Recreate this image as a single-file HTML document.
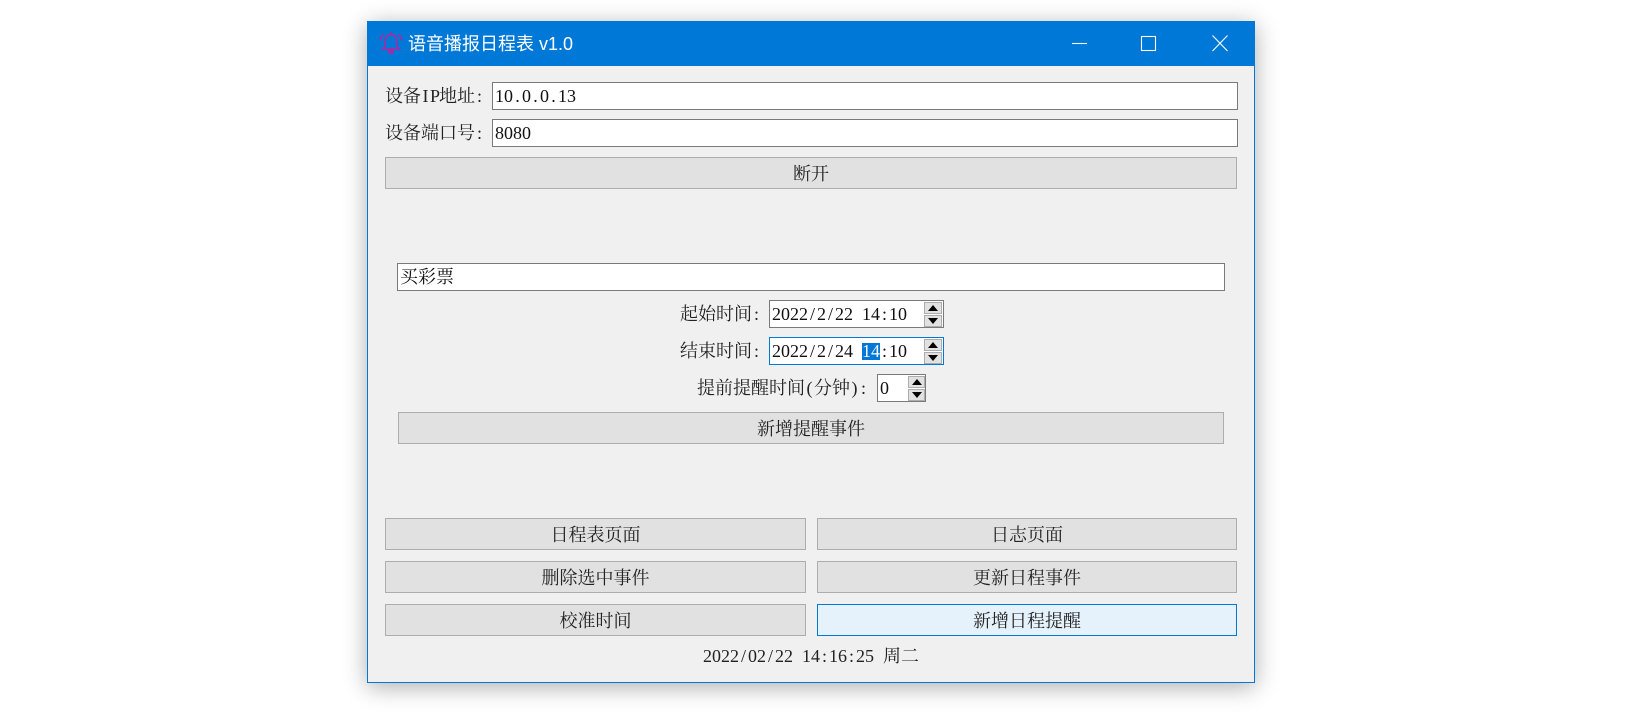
<!DOCTYPE html>
<html lang="zh">
<head>
<meta charset="utf-8">
<title>语音播报日程表 v1.0</title>
<style>
html,body{margin:0;padding:0;width:1649px;height:712px;overflow:hidden;background:#fff}
*{box-sizing:border-box}
body{position:relative;font-family:"Liberation Serif","Noto Serif CJK SC",serif;font-size:18px;color:#222}
.a{position:absolute}
.m{display:inline-block;width:9px;text-align:center;white-space:pre}
.win{position:absolute;left:367px;top:21px;width:888px;height:662px;background:#f0f0f0;border:1px solid #0078d7;box-shadow:0 4px 22px rgba(0,0,0,.32)}
.bar{position:absolute;left:367px;top:21px;width:888px;height:45px;background:#0078d7}
.title{position:absolute;left:408px;top:31px;height:26px;line-height:26px;color:#fff;font-family:"Liberation Sans","Noto Sans CJK SC",sans-serif;font-size:18px;white-space:nowrap}
.btn{position:absolute;background:#e1e1e1;border:1px solid #adadad;display:flex;align-items:center;justify-content:center;color:#222}
.btn.on{background:#e5f1fb;border-color:#0078d7}
.inp{position:absolute;background:#fff;border:1px solid #7a7a7a;line-height:26px;padding-left:2px;white-space:pre;color:#111}
.lab{position:absolute;height:26px;line-height:26px;white-space:nowrap;color:#222}
.sel{background:#0078d7;color:#fff;display:inline-block;height:17px;line-height:17px}
.sp{position:absolute;width:18px;height:12px;background:#e1e1e1;border:1px solid #adadad}
.sp svg{position:absolute;left:3px;top:2px}
</style>
</head>
<body>
<div class="win"></div>
<div class="bar"></div>

<svg class="a" style="left:379px;top:31px" width="24" height="25" viewBox="0 0 24 25" fill="none" stroke="#9a30a8" stroke-width="1.8">
<path d="M12 3.500c-3.600 0-5.600 2.700-5.600 6v4.200c0 1.800-1 2.900-2.400 4.300h16c-1.400-1.400-2.400-2.500-2.400-4.300V9.500c0-3.300-2-6-5.600-6z"/>
<path d="M9.500 19.500c.4 2 1.300 3 2.500 3s2.100-1 2.500-3z" fill="#9a30a8"/>
<path d="M12 1v2.500M4.500 3.500C2.500 5 1.500 7 1.200 9.500M19.500 3.500c2 1.500 3 3.500 3.300 6"/>
</svg>
<div class="title">语音播报日程表 v1.0</div>

<svg class="a" style="left:1065px;top:30px" width="175" height="28" viewBox="0 0 175 28" fill="none" stroke="#fff" stroke-width="1.100">
<path d="M7 13.500h15"/>
<rect x="76.500" y="6.500" width="14" height="14"/>
<path d="M147.500 5.500l15 15.500M162.500 5.500l-15 15.500"/>
</svg>

<div class="lab" style="left:385px;top:83px">设备<span class="m">I</span><span class="m">P</span>地址<span class="m">:</span></div>
<div class="inp" style="left:492px;top:82px;width:746px;height:28px">10<span class="m">.</span>0<span class="m">.</span>0<span class="m">.</span>13</div>
<div class="lab" style="left:385px;top:120px">设备端口号<span class="m">:</span></div>
<div class="inp" style="left:492px;top:119px;width:746px;height:28px">8080</div>
<div class="btn" style="left:385px;top:157px;width:852px;height:32px">断开</div>

<div class="inp" style="left:397px;top:263px;width:828px;height:28px">买彩票</div>

<div class="lab" style="left:680px;top:301px">起始时间<span class="m">:</span></div>
<div class="inp" style="left:769px;top:300px;width:175px;height:28px">2022<span class="m">/</span>2<span class="m">/</span>22<span class="m"> </span>14<span class="m">:</span>10</div>
<div class="sp" style="left:924px;top:302px"><svg width="10" height="7"><path d="M5 0L10 6H0z" fill="#000"/></svg></div>
<div class="sp" style="left:924px;top:315px"><svg width="10" height="7"><path d="M5 6L10 0H0z" fill="#000"/></svg></div>

<div class="lab" style="left:680px;top:338px">结束时间<span class="m">:</span></div>
<div class="inp" style="left:769px;top:337px;width:175px;height:28px;border-color:#0078d7">2022<span class="m">/</span>2<span class="m">/</span>24<span class="m"> </span><span class="sel">14</span><span class="m">:</span>10</div>
<div class="sp" style="left:924px;top:339px"><svg width="10" height="7"><path d="M5 0L10 6H0z" fill="#000"/></svg></div>
<div class="sp" style="left:924px;top:352px"><svg width="10" height="7"><path d="M5 6L10 0H0z" fill="#000"/></svg></div>

<div class="lab" style="left:697px;top:375px">提前提醒时间<span class="m">(</span>分钟<span class="m">)</span><span class="m">:</span></div>
<div class="inp" style="left:877px;top:374px;width:49px;height:28px">0</div>
<div class="sp" style="left:908px;top:376px;width:17px"><svg width="10" height="7"><path d="M5 0L10 6H0z" fill="#000"/></svg></div>
<div class="sp" style="left:908px;top:389px;width:17px"><svg width="10" height="7"><path d="M5 6L10 0H0z" fill="#000"/></svg></div>

<div class="btn" style="left:398px;top:412px;width:826px;height:32px">新增提醒事件</div>

<div class="btn" style="left:385px;top:518px;width:421px;height:32px">日程表页面</div>
<div class="btn" style="left:817px;top:518px;width:420px;height:32px">日志页面</div>
<div class="btn" style="left:385px;top:561px;width:421px;height:32px">删除选中事件</div>
<div class="btn" style="left:817px;top:561px;width:420px;height:32px">更新日程事件</div>
<div class="btn" style="left:385px;top:604px;width:421px;height:32px">校准时间</div>
<div class="btn on" style="left:817px;top:604px;width:420px;height:32px">新增日程提醒</div>

<div class="lab" style="left:703px;top:643px">2022<span class="m">/</span>02<span class="m">/</span>22<span class="m"> </span>14<span class="m">:</span>16<span class="m">:</span>25<span class="m"> </span>周二</div>
</body>
</html>
